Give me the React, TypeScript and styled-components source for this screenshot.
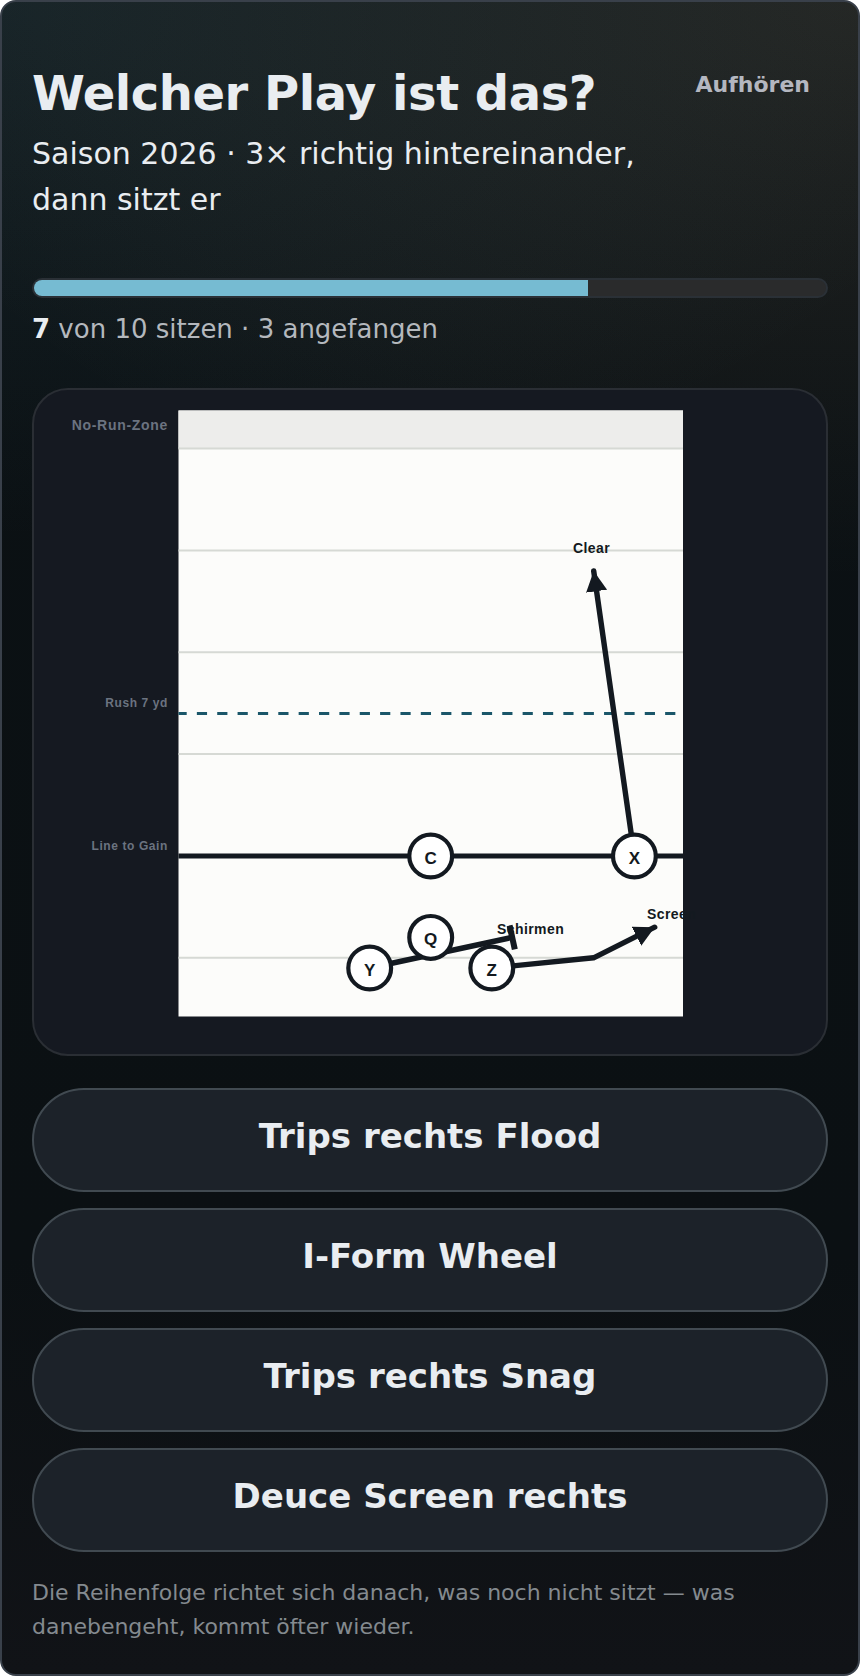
import React from "react";
import styled, { createGlobalStyle } from "styled-components";

const GlobalStyle = createGlobalStyle`
  *, *::before, *::after { box-sizing: border-box; }
  body {
    margin: 0;
    background: #ffffff;
    font-family: "DejaVu Sans", Verdana, sans-serif;
    color: #e9edf1;
  }
`;

const Page = styled.main`
  display: flex;
  flex-direction: column;
  min-height: 100vh;
  padding: 62px 30px 30px;
  border: 2px solid #39404a;
  border-radius: 16px;
  background:
    radial-gradient(ellipse 120% 540px at 0% 0%, rgba(110, 185, 205, 0.1), transparent),
    radial-gradient(ellipse 120% 580px at 100% 0%, rgba(235, 200, 155, 0.11), transparent),
    linear-gradient(180deg, #0b1114 0%, #0b1013 75%, #111317 100%);
`;

const Header = styled.header`
  display: flex;
  align-items: flex-start;
  gap: 24px;
`;

const Heading = styled.div`
  flex: 1;
  min-width: 0;
`;

const Title = styled.h1`
  margin: 0 0 9px;
  font-size: 48px;
  line-height: 58px;
  font-weight: 700;
  letter-spacing: -0.01em;
`;

const Subtitle = styled.p`
  margin: 0;
  font-size: 30px;
  line-height: 46px;
`;

const QuitButton = styled.button`
  height: 40px;
  padding: 0 18px;
  border: 0;
  background: transparent;
  color: #b4b7c0;
  font: inherit;
  font-size: 22px;
  font-weight: 700;
  cursor: pointer;
`;

const Track = styled.div`
  height: 20px;
  margin-top: 55px;
  border: 2px solid #2a3036;
  border-radius: 10px;
  background: #2a2b2c;
  overflow: hidden;
`;

const Fill = styled.div`
  height: 100%;
  background: #76bbd2;
`;

const Stats = styled.p`
  margin: 10px 0 0;
  font-size: 26px;
  line-height: 42px;
  color: #b4b8bd;

  strong {
    color: #e9edf1;
  }
`;

const Card = styled.figure`
  margin: 38px 0 32px;
  padding: 20px;
  border: 2px solid #2a2e34;
  border-radius: 36px;
  background: #151921;
`;

const Diagram = styled.svg`
  display: block;
  width: 100%;
  height: auto;
  font-family: "Liberation Sans", Arial, sans-serif;
  font-weight: 700;
`;

const SideLabel = styled.text<{ $large?: boolean }>`
  fill: #6b7380;
  font-size: ${(p) => (p.$large ? 14 : 12)}px;
  letter-spacing: 0.05em;
  text-anchor: end;
`;

const RouteLabel = styled.text`
  fill: #131920;
  font-size: 14px;
  letter-spacing: 0.03em;
`;

const PlayerLetter = styled.text`
  fill: #131920;
  font-size: 17px;
  text-anchor: middle;
`;

const Answers = styled.div`
  display: grid;
  gap: 16px;
`;

const AnswerButton = styled.button`
  height: 104px;
  padding: 0 32px 8px;
  border: 2px solid #414a51;
  border-radius: 52px;
  background: #1c2229;
  color: #e9edf1;
  font: inherit;
  font-size: 34px;
  font-weight: 700;
  cursor: pointer;
`;

const Hint = styled.p`
  margin: 24px 0 0;
  font-size: 22px;
  line-height: 34px;
  color: #848a8f;
`;

const INK = "#131920";

const players = [
  { name: "C", x: 376.7, y: 446 },
  { name: "X", x: 580.4, y: 446 },
  { name: "Q", x: 376.7, y: 527.4 },
  { name: "Y", x: 315.7, y: 558 },
  { name: "Z", x: 437.8, y: 558 },
];

const yardLines = [38.5, 140.5, 242.3, 344.1, 547.8];

const answers = ["Trips rechts Flood", "I-Form Wheel", "Trips rechts Snag", "Deuce Screen rechts"];

function PlayDiagram() {
  return (
    <Diagram viewBox="0 0 752 624" role="img" aria-label="Spielzug">
      <defs>
        <marker id="arrow" markerUnits="userSpaceOnUse" markerWidth="22" markerHeight="22" refX="20.4" refY="10.6" orient="auto">
          <path d="M0 0L20.4 10.6L0 21.2Z" fill={INK} />
        </marker>
      </defs>

      <rect x="124.5" y="0.5" width="504.5" height="606" fill="#fcfcfa" />
      <rect x="124.5" y="0.5" width="504.5" height="38" fill="#ededeb" />
      {yardLines.map((y) => (
        <path key={y} d={`M124.5 ${y}H629`} stroke="#d6d9d4" strokeWidth="2" />
      ))}
      <path d="M124.5 303.5H629" stroke="#1a5669" strokeWidth="3" strokeDasharray="10.2 10.16" strokeDashoffset="2" />
      <path d="M124.5 446H629" stroke={INK} strokeWidth="5" />

      <SideLabel $large x="114" y="20">No-Run-Zone</SideLabel>
      <SideLabel x="114" y="297">Rush 7 yd</SideLabel>
      <SideLabel x="114" y="440">Line to Gain</SideLabel>

      <RouteLabel x="519" y="143">Clear</RouteLabel>
      <RouteLabel x="443" y="524">Schirmen</RouteLabel>
      <RouteLabel x="593" y="509">Screen</RouteLabel>

      <g fill="none" stroke={INK} strokeWidth="5.4" strokeLinecap="round" strokeLinejoin="round">
        <path d="M580.4 446L539.7 161" markerEnd="url(#arrow)" />
        <path d="M437.8 558L539.6 547.8L600.7 517.2" markerEnd="url(#arrow)" />
        <path d="M315.7 558L458.2 527.4" />
        <path d="M455.6 515.5L460.8 539.3" strokeWidth="6" strokeLinecap="butt" />
      </g>

      {players.map((p) => (
        <g key={p.name}>
          <circle cx={p.x} cy={p.y} r="21.4" fill="#ffffff" stroke={INK} strokeWidth="4.2" />
          <PlayerLetter x={p.x} y={p.y + 7.6}>{p.name}</PlayerLetter>
        </g>
      ))}
    </Diagram>
  );
}

export default function App() {
  const total = 10;
  const known = 7;
  return (
    <>
      <GlobalStyle />
      <Page>
        <Header>
          <Heading>
            <Title>Welcher Play ist das?</Title>
            <Subtitle>Saison 2026 · 3× richtig hintereinander, dann sitzt er</Subtitle>
          </Heading>
          <QuitButton type="button">Aufhören</QuitButton>
        </Header>

        <Track role="progressbar" aria-label="Fortschritt" aria-valuemin={0} aria-valuemax={total} aria-valuenow={known}>
          <Fill style={{ width: `${(known / total) * 100}%` }} />
        </Track>
        <Stats>
          <strong>{known}</strong> von {total} sitzen · 3 angefangen
        </Stats>

        <Card>
          <PlayDiagram />
        </Card>

        <Answers>
          {answers.map((a) => (
            <AnswerButton key={a} type="button">{a}</AnswerButton>
          ))}
        </Answers>

        <Hint>
          Die Reihenfolge richtet sich danach, was noch nicht sitzt — was danebengeht, kommt öfter wieder.
        </Hint>
      </Page>
    </>
  );
}
